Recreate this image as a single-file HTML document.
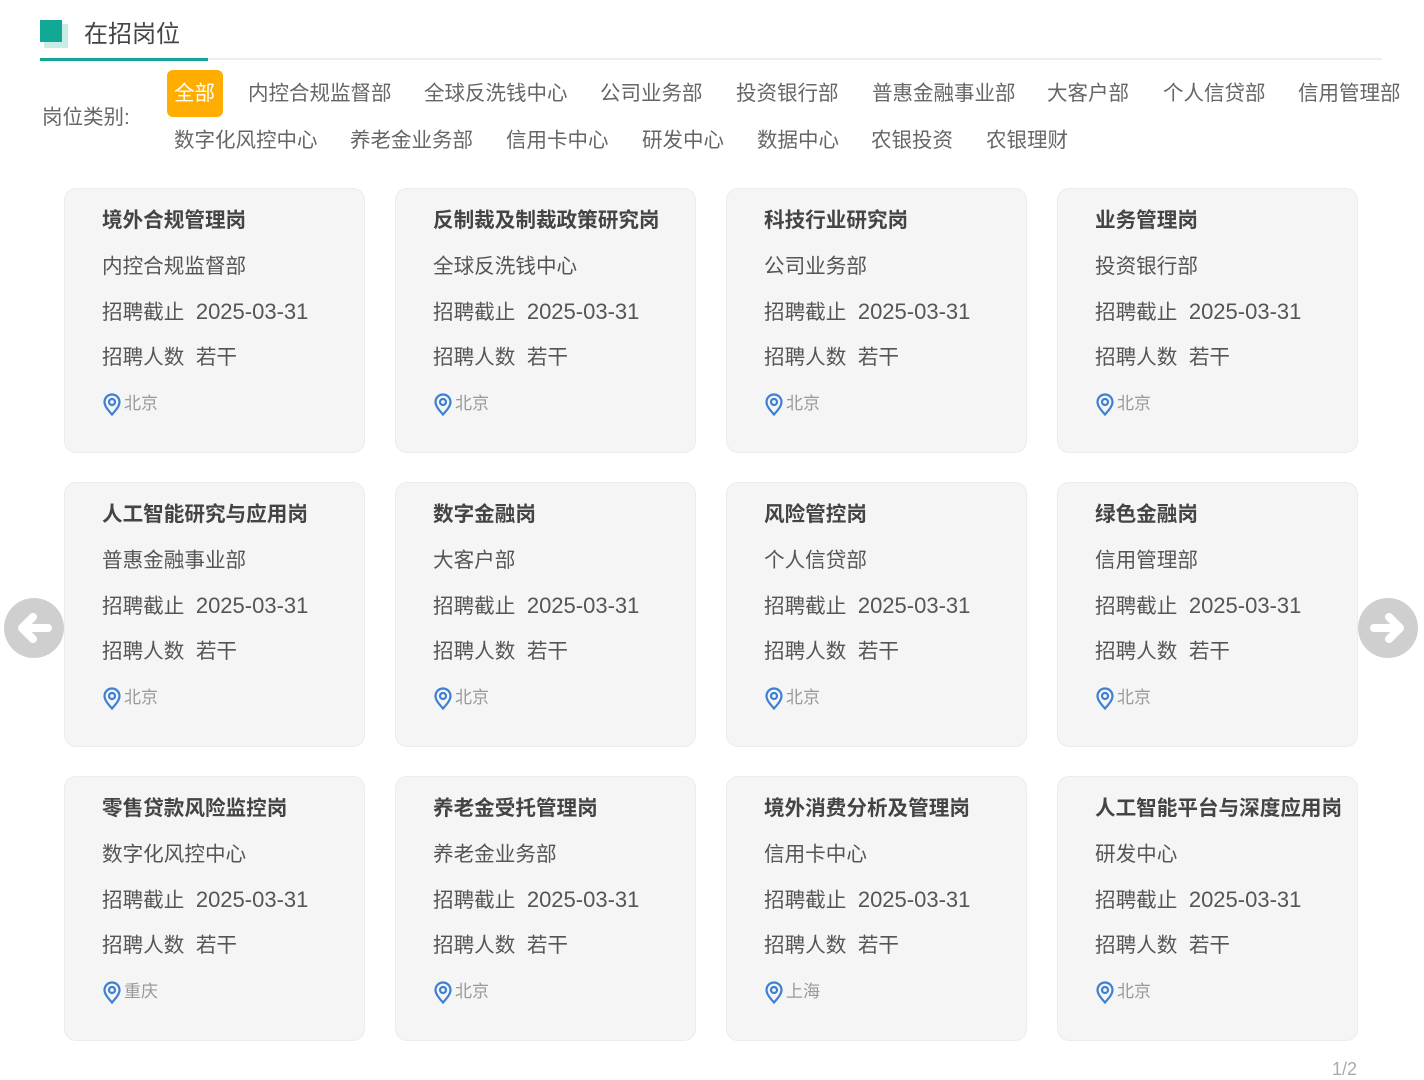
<!DOCTYPE html>
<html><head><meta charset="utf-8"><style>
*{margin:0;padding:0;box-sizing:border-box}
body{width:1424px;height:1080px;background:#fff;position:relative;overflow:hidden;font-family:"Liberation Sans","Noto Sans CJK SC",sans-serif;color:#555}
.a{position:absolute;white-space:nowrap}
.f{font-size:20.5px;color:#666;line-height:24px}
.card{position:absolute;width:301px;height:265px;background:#f5f5f5;border:1px solid #ececec;border-radius:12px}
.card .t{position:absolute;left:37px;top:20px;font-size:20.6px;font-weight:bold;color:#444;line-height:24px;white-space:nowrap}
.card .l{position:absolute;left:37px;font-size:20.6px;color:#555;line-height:24px;white-space:nowrap}
.card .l .n{font-size:22px}
.card .loc{position:absolute;left:37px;top:203px;font-size:17px;color:#999;line-height:24px;display:flex;align-items:center}
.card .loc svg{margin-right:2px}
.arrow{position:absolute;width:60px;height:60px;border-radius:50%;background:#cfcfcf}
</style></head><body>
<div class="a" style="left:44px;top:24px;width:24px;height:24px;background:#c9ece6"></div>
<div class="a" style="left:40px;top:20px;width:22px;height:22px;background:#13a795"></div>
<div class="a" style="left:84px;top:19px;font-size:24px;color:#444;line-height:32px">在招岗位</div>
<div class="a" style="left:40px;top:58px;width:1342px;height:2px;background:#eeeeee"></div>
<div class="a" style="left:40px;top:58px;width:168px;height:3px;background:#13a795"></div>

<div class="a f" style="left:42px;top:106px">岗位类别:</div>
<div class="a" style="left:167px;top:70px;width:56px;height:47px;background:#ffad00;border-radius:6px"></div>
<div class="a f" style="left:174px;top:82px;color:#fff">全部</div>
<div class="a f" style="left:248px;top:82px">内控合规监督部</div>
<div class="a f" style="left:424px;top:82px">全球反洗钱中心</div>
<div class="a f" style="left:600px;top:82px">公司业务部</div>
<div class="a f" style="left:736px;top:82px">投资银行部</div>
<div class="a f" style="left:872px;top:82px">普惠金融事业部</div>
<div class="a f" style="left:1047px;top:82px">大客户部</div>
<div class="a f" style="left:1163px;top:82px">个人信贷部</div>
<div class="a f" style="left:1298px;top:82px">信用管理部</div>
<div class="a f" style="left:174px;top:129px">数字化风控中心</div>
<div class="a f" style="left:350px;top:129px">养老金业务部</div>
<div class="a f" style="left:506px;top:129px">信用卡中心</div>
<div class="a f" style="left:642px;top:129px">研发中心</div>
<div class="a f" style="left:757px;top:129px">数据中心</div>
<div class="a f" style="left:871px;top:129px">农银投资</div>
<div class="a f" style="left:986px;top:129px">农银理财</div>

<div class="arrow" style="left:4px;top:598px"><svg width="60" height="60" viewBox="0 0 60 60"><path d="M44 30H20M29 19L18 30L29 41" stroke="#fff" stroke-width="8" fill="none" stroke-linecap="round" stroke-linejoin="round"/></svg></div>
<div class="arrow" style="left:1358px;top:598px"><svg width="60" height="60" viewBox="0 0 60 60"><path d="M16 30H40M31 19L42 30L31 41" stroke="#fff" stroke-width="8" fill="none" stroke-linecap="round" stroke-linejoin="round"/></svg></div>

<div id="grid"></div>
<div class="a" style="left:1332px;top:1058px;font-size:18px;color:#aaa;line-height:22px">1/2</div>

<script>
var d=[["境外合规管理岗","内控合规监督部","北京"],["反制裁及制裁政策研究岗","全球反洗钱中心","北京"],["科技行业研究岗","公司业务部","北京"],["业务管理岗","投资银行部","北京"],
["人工智能研究与应用岗","普惠金融事业部","北京"],["数字金融岗","大客户部","北京"],["风险管控岗","个人信贷部","北京"],["绿色金融岗","信用管理部","北京"],
["零售贷款风险监控岗","数字化风控中心","重庆"],["养老金受托管理岗","养老金业务部","北京"],["境外消费分析及管理岗","信用卡中心","上海"],["人工智能平台与深度应用岗","研发中心","北京"]];
var xs=[64,395,726,1057],ys=[188,482,776],h="";
var pin='<svg width="20" height="23" viewBox="0 0 20 23"><path d="M10 21.5C6 17 2.5 13 2.5 9a7.5 7.5 0 0 1 15 0c0 4-3.5 8-7.5 12.5z" fill="none" stroke="#3d7fd3" stroke-width="2.2"/><circle cx="10" cy="9" r="3" fill="none" stroke="#3d7fd3" stroke-width="2.2"/></svg>';
d.forEach(function(c,i){var x=xs[i%4],y=ys[Math.floor(i/4)];
h+='<div class="card" style="left:'+x+'px;top:'+y+'px"><div class="t">'+c[0]+'</div><div class="l" style="top:66px">'+c[1]+'</div><div class="l" style="top:111px">招聘截止&nbsp;&nbsp;<span class="n">2025-03-31</span></div><div class="l" style="top:157px">招聘人数&nbsp;&nbsp;若干</div><div class="loc">'+pin+c[2]+'</div></div>';});
document.getElementById("grid").innerHTML=h;
</script>
</body></html>
